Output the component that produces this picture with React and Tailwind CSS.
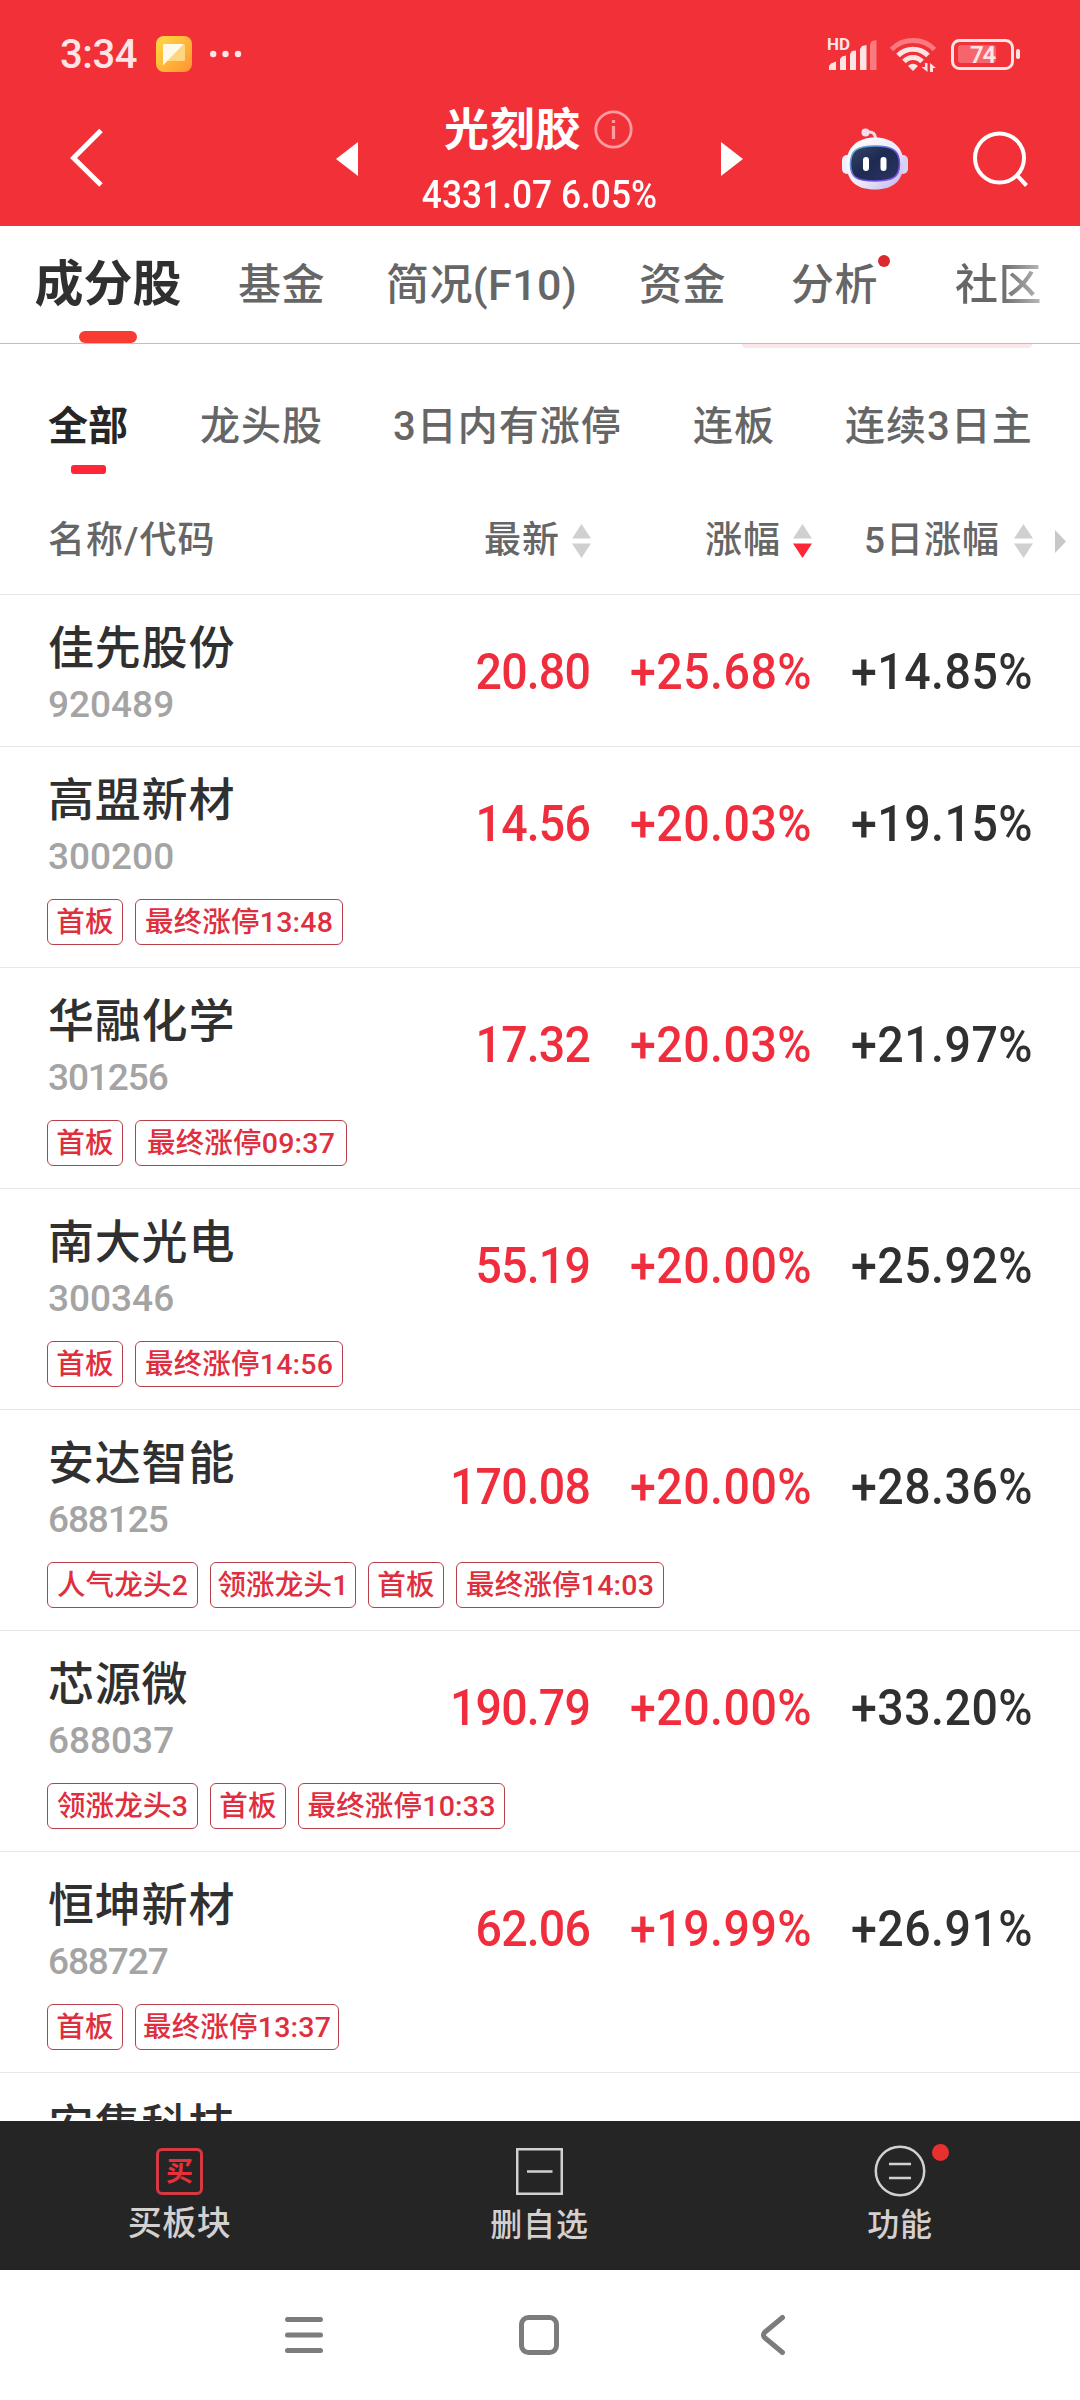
import React from "react"

const tabs = [
  { label: "基金", className: "ml-[56px] w-[88px] tracking-[0.4px]" },
  { label: "简况(F10)", className: "ml-[60px] w-[193px] tracking-[0.4px]" },
  { label: "资金", className: "ml-[60px] w-[88px] tracking-[0.4px]" },
  { label: "分析", className: "ml-[64px] w-[88px] tracking-[0.4px]", dot: true },
]

const filters = [
  { label: "龙头股", className: "ml-[71px] w-[123px]" },
  { label: "3日内有涨停", className: "ml-[70px] w-[231px]" },
  { label: "连板", className: "ml-[69px] w-[82px]" },
  { label: "连续3日主", className: "ml-[70px] w-[190px]" },
]

const stocks = [
  { name: "佳先股份", code: "920489", price: "20.80", change: "+25.68%", change5: "+14.85%", tags: [] },
  {
    name: "高盟新材",
    code: "300200",
    price: "14.56",
    change: "+20.03%",
    change5: "+19.15%",
    tags: [
      { text: "首板", width: "w-[76px]" },
      { text: "最终涨停13:48", width: "w-[208px]" },
    ],
  },
  {
    name: "华融化学",
    code: "301256",
    narrow: true,
    price: "17.32",
    change: "+20.03%",
    change5: "+21.97%",
    tags: [
      { text: "首板", width: "w-[76px]" },
      { text: "最终涨停09:37", width: "w-[212px]" },
    ],
  },
  {
    name: "南大光电",
    code: "300346",
    price: "55.19",
    change: "+20.00%",
    change5: "+25.92%",
    tags: [
      { text: "首板", width: "w-[76px]" },
      { text: "最终涨停14:56", width: "w-[208px]" },
    ],
  },
  {
    name: "安达智能",
    code: "688125",
    narrow: true,
    price: "170.08",
    change: "+20.00%",
    change5: "+28.36%",
    tags: [
      { text: "人气龙头2", width: "w-[151px]" },
      { text: "领涨龙头1", width: "w-[146px]" },
      { text: "首板", width: "w-[76px]" },
      { text: "最终涨停14:03", width: "w-[208px]" },
    ],
  },
  {
    name: "芯源微",
    code: "688037",
    price: "190.79",
    change: "+20.00%",
    change5: "+33.20%",
    tags: [
      { text: "领涨龙头3", width: "w-[151px]" },
      { text: "首板", width: "w-[76px]" },
      { text: "最终涨停10:33", width: "w-[207px]" },
    ],
  },
  {
    name: "恒坤新材",
    code: "688727",
    narrow: true,
    price: "62.06",
    change: "+19.99%",
    change5: "+26.91%",
    tags: [
      { text: "首板", width: "w-[76px]" },
      { text: "最终涨停13:37", width: "w-[204px]" },
    ],
  },
]

function StatusBar() {
  return (
    <div className="flex h-[72px] items-end">
      <div className="flex h-9 w-full items-center pl-[60px]">
        <span className="w-[80px] pt-[2px] text-[40px] leading-9 font-medium tracking-[-0.4px] text-[#ffe4e6]">3:34</span>
        <svg className="ml-4 h-9 w-9" viewBox="0 0 36 36">
          <defs>
            <linearGradient id="noteBg" x1="0" y1="0" x2="1" y2="1">
              <stop offset="0" stopColor="#ffdc45" />
              <stop offset="1" stopColor="#ff9230" />
            </linearGradient>
          </defs>
          <rect width="36" height="36" rx="8" fill="url(#noteBg)" />
          <rect x="7" y="8" width="22" height="17" rx="1.5" fill="#ffd680" />
          <path d="M7 29.5V9.5Q7 8 8.500 8H27.500Z" fill="#fff9ec" />
        </svg>
        <svg className="ml-[18px] h-2 w-8" viewBox="0 0 32 8" fill="#ffe4e6">
          <circle cx="3.200" cy="4" r="3.200" />
          <circle cx="15.500" cy="4" r="3.200" />
          <circle cx="28" cy="4" r="3.200" />
        </svg>
        <div className="relative ml-[585px] h-9 w-[51px]">
          <span className="absolute top-[1px] left-0 text-[17px] leading-[14px] font-bold text-[#ffe4e6]">HD</span>
          <svg className="h-9 w-[51px]" viewBox="0 0 51 36" fill="#ffe4e6">
            <path d="M2 34V30L4 27.500 9 25.500V34Z" />
            <path d="M13 34V23L15 20.500 19 19.500V34Z" />
            <path d="M23 34V18L25 15 29 14.500V34Z" />
            <path d="M33 34V13L35 10 39.500 9V34Z" />
            <path d="M43 34V8L45 5 49.500 4V34Z" fill="#fb7a80" />
          </svg>
        </div>
        <svg className="ml-[12px] h-9 w-[46px]" viewBox="0 0 46 36" fill="none" stroke="#ffe4e6" strokeWidth="5">
          <path d="M1.500 13.500C13 1.500 33 1.500 44.500 13.500" stroke="#fb7a80" />
          <path d="M8 19.500C16 11 30 11 38 19.500" />
          <path d="M14 25.500C19 20 27 20 32 25.500" />
          <path d="M18 30Q23 25.500 28 30L23 35Z" fill="#ffe4e6" stroke="none" />
          <path d="M37.500 27V36L31.500 31H35V27ZM40 36V27L46 32H43V36Z" fill="#ffe4e6" stroke="none" />
        </svg>
        <svg className="ml-[15px] h-9 w-[70px]" viewBox="0 0 70 36">
          <rect x="1.500" y="4.500" width="60" height="28" rx="7" fill="none" stroke="#ffe4e6" strokeWidth="3" />
          <rect x="7" y="9" width="38" height="18" rx="3" fill="#f7656c" />
          <rect x="65" y="13" width="4" height="10" rx="2" fill="#ffe4e6" />
          <text x="31.500" y="26.500" textAnchor="middle" fontSize="24" fontWeight="600" fill="#ffe4e6" letterSpacing="-1.200">
            74
          </text>
        </svg>
      </div>
    </div>
  )
}

function Robot() {
  return (
    <svg className="ml-[99px] h-[62px] w-[66px]" viewBox="0 0 66 62">
      <defs>
        <linearGradient id="shell" x1="0" y1="0" x2="1" y2="1">
          <stop offset="0" stopColor="#fff" />
          <stop offset="0.550" stopColor="#eeeafb" />
          <stop offset="1" stopColor="#b9b4ea" />
        </linearGradient>
        <linearGradient id="rim" x1="0" y1="0" x2="1" y2="1">
          <stop offset="0" stopColor="#5fc6cf" />
          <stop offset="0.600" stopColor="#6a4be0" />
          <stop offset="1" stopColor="#8c52e8" />
        </linearGradient>
        <linearGradient id="visor" x1="0" y1="0" x2="1" y2="1">
          <stop offset="0" stopColor="#39456b" />
          <stop offset="0.450" stopColor="#1d2a52" />
          <stop offset="1" stopColor="#2c3560" />
        </linearGradient>
      </defs>
      <circle cx="23.500" cy="4.500" r="4" fill="#f4ddee" />
      <path d="M24 4.500C31 3 33.500 5.500 33.500 12" fill="none" stroke="#f4ddee" strokeWidth="3" />
      <rect x="0" y="27" width="10" height="19" rx="5" fill="#f1edfb" />
      <rect x="56" y="27" width="10" height="19" rx="5" fill="#d6d2f3" />
      <path d="M33 9.500C51 9.500 61.500 20 61.500 35C61.500 53 51 61.500 33 61.500C14 61.500 4.500 53 4.500 35C4.500 20 15 9.500 33 9.500Z" fill="url(#shell)" />
      <path
        d="M33 18C51 18 57.500 23 57.500 36C57.500 49 51 53 33 53C14 53 8.500 49 8.500 36C8.500 23 14 18 33 18Z"
        fill="url(#visor)"
        stroke="url(#rim)"
        strokeWidth="1.600"
      />
      <rect x="21" y="29" width="6" height="14" rx="3" fill="#fff" />
      <rect x="38.500" y="29" width="6" height="14" rx="3" fill="#fff" />
    </svg>
  )
}

function Header() {
  return (
    <header className="h-[226px] bg-[#f13038] text-white">
      <StatusBar />
      <div className="mt-[20px] flex h-[134px] items-center pl-[70px]">
        <svg className="h-[60px] w-[33px]" viewBox="0 0 33 60" fill="none" stroke="#fff" strokeWidth="5">
          <path d="M31 1.500 3.500 29 31 56" />
        </svg>
        <svg className="ml-[233px] h-[34px] w-[22px]" viewBox="0 0 22 34" fill="#fff">
          <path d="M22 0V34L0 17Z" />
        </svg>
        <div className="flex h-[134px] w-[363px] flex-col items-center pt-4">
          <div className="flex items-center gap-[13px] pr-[2px]">
            <h1 className="text-[45px] leading-[46px] font-bold tracking-[0.7px]">光刻胶</h1>
            <svg className="mb-1 h-[39px] w-[39px]" viewBox="0 0 39 39" fill="none" stroke="#ff9ca1" strokeWidth="2.800">
              <circle cx="19.500" cy="19.500" r="17.700" />
              <path d="M19.500 16V29M19.500 10V13" strokeWidth="3.200" />
            </svg>
          </div>
          <p className="mt-[22px] scale-x-[0.93] text-[38px] leading-[38px] font-medium">4331.07 6.05%</p>
        </div>
        <svg className="h-[34px] w-[22px]" viewBox="0 0 22 34" fill="#fff">
          <path d="M0 0V34L22 17Z" />
        </svg>
        <Robot />
        <svg className="ml-[65px] h-[56px] w-[56px]" viewBox="0 0 56 56" fill="none" stroke="#fff" strokeWidth="4">
          <circle cx="26.500" cy="27" r="24.500" />
          <path d="M44 44.500 53.500 54.500" />
        </svg>
      </div>
    </header>
  )
}

function Tabs() {
  return (
    <nav className="relative flex h-[118px] items-start border-b border-[#c0c0c0] pl-[34px] text-[43px] whitespace-nowrap text-[#666]">
      <div className="flex w-[148px] flex-col items-center">
        <span className="pt-[34px] text-[49px] leading-[50px] font-bold text-[#303030]">成分股</span>
        <span className="mt-[21px] h-3 w-[58px] rounded-full bg-[#f93c32]"></span>
      </div>
      {tabs.map((tab) => (
        <div key={tab.label} className={`relative pt-[37px] leading-[44px] font-medium ${tab.className}`}>
          {tab.label}
          {tab.dot && <span className="absolute top-[29px] right-[-11px] h-3 w-3 rounded-full bg-[#db2b2e]"></span>}
        </div>
      ))}
      <div className="ml-[76px] bg-linear-to-r from-[#666] from-50% to-[#bbb] bg-clip-text pt-[37px] leading-[44px] font-medium tracking-[0.4px] text-transparent">
        社区
      </div>
      <div className="absolute top-[118px] left-[742px] h-[4px] w-[290px] rounded-b-lg bg-[#fbe6e8]"></div>
    </nav>
  )
}

function Filters() {
  return (
    <div className="flex h-[148px] items-start overflow-hidden pl-[47px] text-[40px] leading-[42px] whitespace-nowrap text-[#666]">
      <div className="flex w-[82px] flex-col items-center pt-[62px]">
        <span className="font-bold text-[#262626]">全部</span>
        <span className="mt-[17px] h-[9px] w-[35px] rounded-[3px] bg-[#ff2638]"></span>
      </div>
      {filters.map((item) => (
        <span key={item.label} className={`pt-[62px] font-medium tracking-[1px] ${item.className}`}>
          {item.label}
        </span>
      ))}
    </div>
  )
}

function SortArrows({ active }) {
  return (
    <svg className="h-[34px] w-[19px]" viewBox="0 0 19 34" fill="#d0d0d0">
      <path d="M9.500 0 19 14.500H0Z" />
      <path d="M0 19.500H19L9.500 34Z" fill={active ? "#ff2638" : "#d0d0d0"} />
    </svg>
  )
}

function TableHead() {
  return (
    <div className="flex h-[103px] items-center border-b border-[#e8e8e8] pb-[4px] pl-12 text-[37px] leading-[40px] font-medium tracking-[1px] whitespace-nowrap text-[#666]">
      <span className="w-[436px]">名称/代码</span>
      <span className="w-[88px]">最新</span>
      <SortArrows />
      <span className="ml-[114px] w-[88px]">涨幅</span>
      <SortArrows active />
      <span className="ml-[52px] w-[150px]">5日涨幅</span>
      <SortArrows />
      <svg className="ml-[22px] h-[23px] w-[11px]" viewBox="0 0 11 23" fill="#c8c8c8">
        <path d="M0 0V23L11 11.500Z" />
      </svg>
    </div>
  )
}

function StockRow({ stock }) {
  return (
    <div className={`border-b border-[#e8e8e8] ${stock.tags.length > 0 ? "h-[221px]" : "h-[152px]"}`}>
      <div className="flex pl-12">
        <div className="w-[342px] pt-[30px]">
          <div className="text-[46px] leading-[46px] font-medium tracking-[0.8px] text-[#303030]">{stock.name}</div>
          <div
            className={`mt-[15px] text-[37px] leading-[38px] font-medium text-[#a4a4a4] ${
              stock.narrow ? "tracking-[-1.1px]" : "tracking-[0px]"
            }`}
          >
            {stock.code}
          </div>
        </div>
        <div className="flex pt-[52px] text-right text-[50px] leading-[50px] font-medium">
          <span className="w-[200px] origin-right scale-x-[0.93] tracking-[-0.9px] text-[#ef2d3c]">{stock.price}</span>
          <span className="w-[222px] origin-right scale-x-[0.93] tracking-[0.5px] text-[#ef2d3c]">{stock.change}</span>
          <span className="w-[221px] origin-right scale-x-[0.93] tracking-[0.5px] text-[#303030]">{stock.change5}</span>
        </div>
      </div>
      <div className="mt-[23px] flex gap-3 pl-[47px]">
        {stock.tags.map((tag) => (
          <span
            key={tag.text}
            className={`flex h-[46px] items-center justify-center rounded-md border border-[#b8404c] pt-[2px] text-[28.5px] leading-[42px] font-medium tracking-[0.2px] whitespace-nowrap text-[#df2f3e] ${tag.width}`}
          >
            {tag.text}
          </span>
        ))}
      </div>
    </div>
  )
}

function BottomBar() {
  return (
    <div className="flex h-[149px] bg-[#252525] text-[#d4d0d0]">
      <div className="flex w-[359px] flex-col items-center pt-[27px]">
        <span className="flex h-[47px] w-[47px] items-center justify-center rounded-[6px] border-[3px] border-[#d53a42] pt-[2px] text-[27px] leading-none font-bold text-[#e8303b]">
          买
        </span>
        <span className="mt-[9px] text-[34px] leading-[38px] font-medium tracking-[0.5px]">买板块</span>
      </div>
      <div className="flex w-[361px] flex-col items-center pt-[27px]">
        <svg className="h-[47px] w-[47px]" viewBox="0 0 47 47" fill="none" stroke="#d4d0d0" strokeWidth="2.500">
          <rect x="1.250" y="1.250" width="44.500" height="44.500" />
          <path d="M11 23.500H36.500" />
        </svg>
        <span className="mt-[11px] text-[32px] leading-[38px] font-medium tracking-[0.8px]">删自选</span>
      </div>
      <div className="flex w-[360px] flex-col items-center pt-[24px]">
        <div className="relative">
          <svg className="h-[52px] w-[52px]" viewBox="0 0 52 52" fill="none" stroke="#d4d0d0" strokeWidth="2.500">
            <circle cx="26" cy="26" r="24.200" />
            <path d="M15 19H37M15 33H37" />
          </svg>
          <span className="absolute -top-[1px] left-[58px] h-[17px] w-[17px] rounded-full bg-[#e93030]"></span>
        </div>
        <span className="mt-[9px] text-[32px] leading-[38px] font-medium tracking-[0.8px]">功能</span>
      </div>
    </div>
  )
}

function SystemNav() {
  return (
    <div className="flex h-[130px] items-center pl-[285px]">
      <svg className="h-[42px] w-[38px]" viewBox="0 0 38 42" stroke="#7c7c7c" strokeWidth="5" strokeLinecap="round">
        <path d="M2.500 5.500H35.500M2.500 21H35.500M2.500 36.500H35.500" />
      </svg>
      <svg className="ml-[195px] h-[42px] w-[42px]" viewBox="0 0 42 42" fill="none" stroke="#7c7c7c" strokeWidth="5">
        <rect x="3.500" y="3.500" width="35" height="35" rx="7" />
      </svg>
      <svg className="ml-[200px] h-[42px] w-[26px]" viewBox="0 0 26 42" fill="none" stroke="#7c7c7c" strokeWidth="5" strokeLinecap="round" strokeLinejoin="round">
        <path d="M22.500 3.500 4.500 18.500Q2.500 21 4.500 23.500L22.500 38.500" />
      </svg>
    </div>
  )
}

export default function App() {
  return (
    <div className="flex h-[2400px] w-[1080px] flex-col overflow-hidden bg-white font-['Roboto','Noto_Sans_CJK_SC',sans-serif]">
      <Header />
      <Tabs />
      <Filters />
      <TableHead />
      <main className="h-[1526px] overflow-hidden">
        {stocks.map((stock) => (
          <StockRow key={stock.code} stock={stock} />
        ))}
        {/* next row, partly hidden under the bottom bar */}
        <div className="pt-[30px] pl-12 text-[46px] leading-[46px] font-medium tracking-[0.8px] text-[#303030]">安集科技</div>
      </main>
      <BottomBar />
      <SystemNav />
    </div>
  )
}
